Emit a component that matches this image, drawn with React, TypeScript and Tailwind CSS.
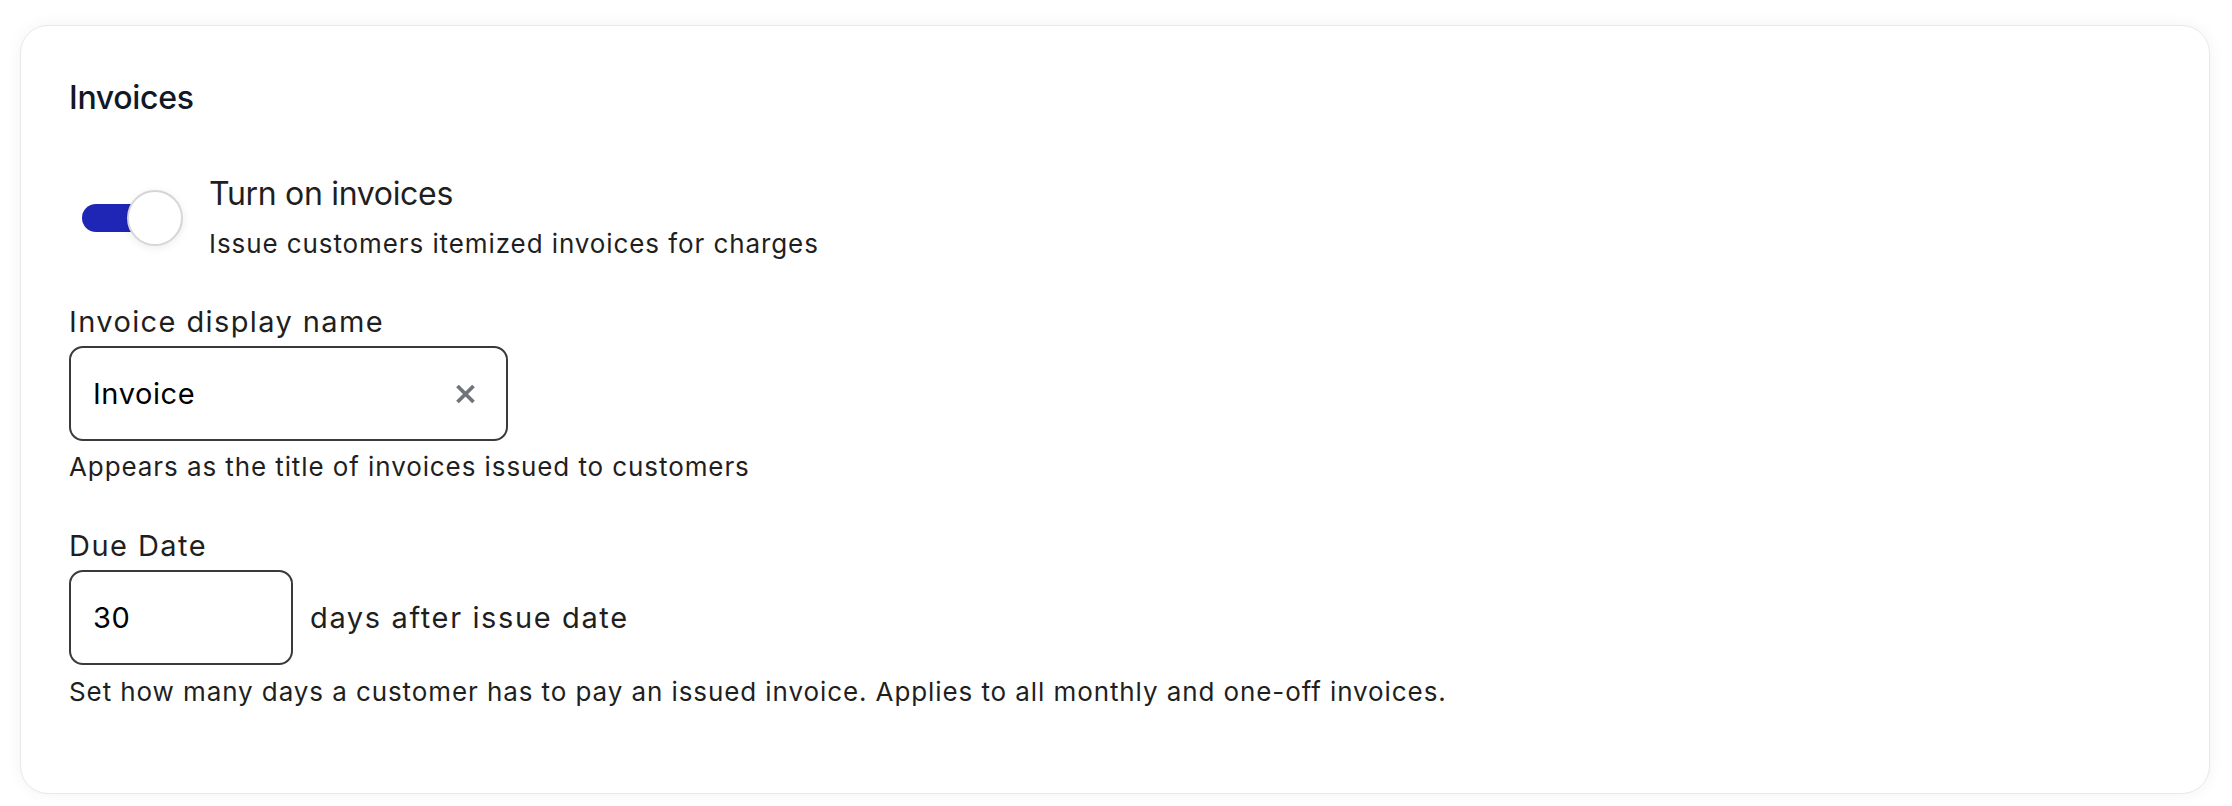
import { useState } from "react";

const Toggle = ({ on, onChange }: { on: boolean; onChange: (v: boolean) => void }) => {
  return (
    <button
      type="button"
      onClick={() => onChange(!on)}
      className="relative w-[101px] h-[56px] shrink-0 ml-[13px]"
    >
      <span
        className={
          "absolute left-0 top-[14px] h-[28px] w-[80px] rounded-full " +
          (on ? "bg-[#1f26b5]" : "bg-[#d1d5db]")
        }
      />
      <span className="absolute right-0 top-0 w-[56px] h-[56px] rounded-full bg-white border-2 border-[#d6d6da] shadow-[0_2px_8px_rgba(0,0,0,0.08)]" />
    </button>
  );
};

const ClearIcon = () => (
  <svg width="21" height="20" viewBox="0 0 21 20" fill="none">
    <path d="M2.5 2L18.5 18M18.5 2L2.5 18" stroke="#6f737a" strokeWidth="3.8" />
  </svg>
);

export default function App() {
  const [enabled, setEnabled] = useState(true);
  const [displayName, setDisplayName] = useState("Invoice");
  const [dueDays, setDueDays] = useState("30");

  return (
    <div className="min-h-screen bg-white pl-[20px] pr-[22px] pt-[25px] pb-[12px] font-[Inter,sans-serif]">
      <div className="bg-white border border-[#e8e8e8] rounded-[28px] shadow-[0_0_16px_rgba(0,0,0,0.05)] pl-[48px] pt-[52px] pb-[83px]">
        <h2 className="text-[32px] leading-[40px] font-medium tracking-[-0.01em] text-[#111827]">Invoices</h2>

        {/* toggle */}
        <div className="flex items-center mt-[56px]">
          <Toggle on={enabled} onChange={setEnabled} />
          <div className="ml-[26px]">
            <p className="text-[32px] leading-[40px] tracking-[-0.01em] text-[#1f1f1f]">Turn on invoices</p>
            <p className="text-[26px] leading-[36px] tracking-[0.035em] text-[#1f1f1f] mt-[12px]">
              Issue customers itemized invoices for charges
            </p>
          </div>
        </div>

        {/* display name */}
        <label className="block text-[29px] leading-[36px] tracking-[0.048em] text-[#1f1f1f] mt-[42px]">
          Invoice display name
        </label>
        <div className="mt-[6px] flex items-center w-[439px] h-[95px] border-2 border-[#3a3a3c] rounded-[14px] pl-[22px] pr-[30px]">
          <input
            value={displayName}
            onChange={(e) => setDisplayName(e.target.value)}
            className="flex-1 min-w-0 text-[29px] tracking-[0.02em] text-black outline-none bg-transparent"
          />
          <button type="button" onClick={() => setDisplayName("")} className="shrink-0">
            <ClearIcon />
          </button>
        </div>
        <p className="text-[26px] leading-[36px] tracking-[0.035em] text-[#1f1f1f] mt-[8px]">
          Appears as the title of invoices issued to customers
        </p>

        {/* due date */}
        <label className="block text-[29px] leading-[36px] tracking-[0.05em] text-[#1f1f1f] mt-[43px]">
          Due Date
        </label>
        <div className="mt-[6px] flex items-center">
          <div className="flex items-center w-[224px] h-[95px] border-2 border-[#3a3a3c] rounded-[14px] pl-[22px]">
            <input
              value={dueDays}
              onChange={(e) => setDueDays(e.target.value)}
              className="w-full text-[29px] tracking-[0.02em] text-black outline-none bg-transparent"
            />
          </div>
          <span className="ml-[17px] text-[29px] tracking-[0.056em] text-[#1f1f1f]">days after issue date</span>
        </div>
        <p className="text-[26px] leading-[36px] tracking-[0.035em] text-[#1f1f1f] mt-[9px]">
          Set how many days a customer has to pay an issued invoice. Applies to all monthly and one-off invoices.
        </p>
      </div>
    </div>
  );
}
